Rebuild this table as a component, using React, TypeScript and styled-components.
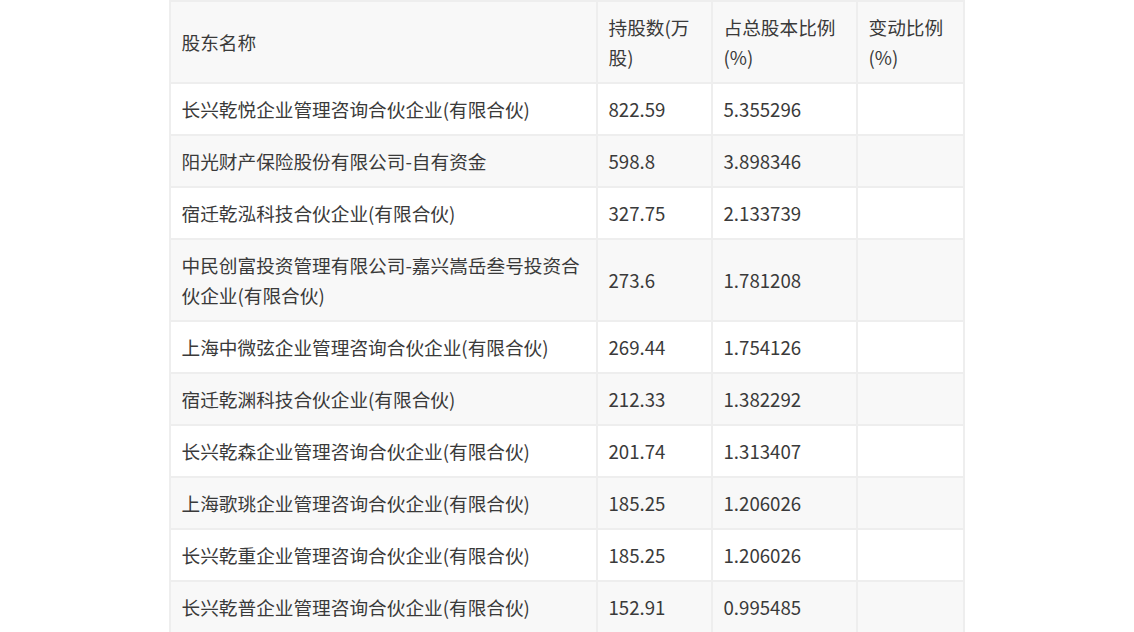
import React from "react";
import styled, { createGlobalStyle } from "styled-components";

const GlobalStyle = createGlobalStyle`
  html, body {
    margin: 0;
    padding: 0;
    background: #ffffff;
  }
  body {
    font-family: "Noto Sans CJK SC", "Noto Sans", sans-serif;
    color: #3a3a3a;
  }
`;

const Page = styled.div`
  display: flex;
  justify-content: center;
  width: 1134px;
  height: 632px;
  overflow: hidden;
`;

const Table = styled.table`
  width: 794px;
  table-layout: fixed;
  border-collapse: collapse;
  margin-left: -1px;
  font-size: 18.67px;
  line-height: 30px;
  color: #3a3a3a;
`;

const Row = styled.tr<{ $shaded?: boolean }>`
  background: ${(p) => (p.$shaded ? "#f8f8f8" : "#ffffff")};
`;

const HeadCell = styled.th`
  text-align: left;
  font-weight: normal;
  vertical-align: middle;
  padding: 10px 11px;
  border: 2px solid #eeeeee;
  height: 60px;
  box-sizing: content-box;
`;

const Cell = styled.td`
  text-align: left;
  vertical-align: middle;
  padding: 10px 11px;
  border: 2px solid #eeeeee;
  word-break: normal;
`;

const rows: [string, string, string, string][] = [
  ["长兴乾悦企业管理咨询合伙企业(有限合伙)", "822.59", "5.355296", ""],
  ["阳光财产保险股份有限公司-自有资金", "598.8", "3.898346", ""],
  ["宿迁乾泓科技合伙企业(有限合伙)", "327.75", "2.133739", ""],
  ["中民创富投资管理有限公司-嘉兴嵩岳叁号投资合伙企业(有限合伙)", "273.6", "1.781208", ""],
  ["上海中微弦企业管理咨询合伙企业(有限合伙)", "269.44", "1.754126", ""],
  ["宿迁乾渊科技合伙企业(有限合伙)", "212.33", "1.382292", ""],
  ["长兴乾森企业管理咨询合伙企业(有限合伙)", "201.74", "1.313407", ""],
  ["上海歌珧企业管理咨询合伙企业(有限合伙)", "185.25", "1.206026", ""],
  ["长兴乾重企业管理咨询合伙企业(有限合伙)", "185.25", "1.206026", ""],
  ["长兴乾普企业管理咨询合伙企业(有限合伙)", "152.91", "0.995485", ""],
];

export default function App() {
  return (
    <>
      <GlobalStyle />
      <Page>
        <Table>
          <colgroup>
            <col style={{ width: 427 }} />
            <col style={{ width: 115 }} />
            <col style={{ width: 145 }} />
            <col style={{ width: 107 }} />
          </colgroup>
          <thead>
            <Row $shaded>
              <HeadCell>股东名称</HeadCell>
              <HeadCell>持股数(万股)</HeadCell>
              <HeadCell>占总股本比例(%)</HeadCell>
              <HeadCell>变动比例(%)</HeadCell>
            </Row>
          </thead>
          <tbody>
            {rows.map((r, i) => (
              <Row key={i} $shaded={i % 2 === 1}>
                <Cell>{r[0]}</Cell>
                <Cell>{r[1]}</Cell>
                <Cell>{r[2]}</Cell>
                <Cell>{r[3]}</Cell>
              </Row>
            ))}
          </tbody>
        </Table>
      </Page>
    </>
  );
}
